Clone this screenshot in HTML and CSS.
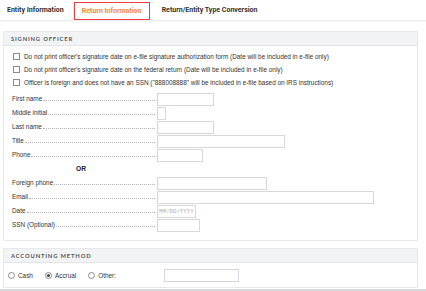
FILE: index.html
```html
<!DOCTYPE html>
<html>
<head>
<meta charset="utf-8">
<link rel="stylesheet" href="styles.css">
</head>
<body>
<div class="tabs">
  <div class="tab">Entity Information</div>
  <div class="sep"></div>
  <div class="tab active">Return Information</div>
  <div class="tab">Return/Entity Type Conversion</div>
</div>

<div class="panel signing">
  <div class="panel-head">SIGNING OFFICER</div>
  <div class="panel-body">
    <div class="checks">
      <label class="check"><span class="box"></span>Do not print officer's signature date on e-file signature authorization form (Date will be included in e-file only)</label>
      <label class="check"><span class="box"></span>Do not print officer's signature date on the federal return (Date will be included in e-file only)</label>
      <label class="check"><span class="box"></span>Officer is foreign and does not have an SSN ("888008888" will be included in e-file based on IRS instructions)</label>
    </div>
    <div class="fields">
      <div class="row"><span class="lbl">First name</span><span class="inp w56"></span></div>
      <div class="row"><span class="lbl">Middle initial</span><span class="inp w9"></span></div>
      <div class="row"><span class="lbl">Last name</span><span class="inp w56"></span></div>
      <div class="row"><span class="lbl">Title</span><span class="inp w128"></span></div>
      <div class="row"><span class="lbl">Phone</span><span class="inp w46"></span></div>
      <div class="or">OR</div>
      <div class="row"><span class="lbl">Foreign phone</span><span class="inp w110"></span></div>
      <div class="row"><span class="lbl">Email</span><span class="inp w217"></span></div>
      <div class="row"><span class="lbl">Date</span><span class="inp w39 ph">MM/DD/YYYY</span></div>
      <div class="row"><span class="lbl">SSN (Optional)</span><span class="inp w43"></span></div>
    </div>
  </div>
</div>

<div class="panel acct">
  <div class="panel-head">ACCOUNTING METHOD</div>
  <div class="panel-body radios">
    <label class="radio r-cash"><span class="circ"></span>Cash</label>
    <label class="radio r-accr"><span class="circ on"></span>Accrual</label>
    <label class="radio r-oth"><span class="circ"></span>Other:</label>
    <span class="inp w74 other"></span>
  </div>
</div>
<div class="bottom-line"></div>
</body>
</html>
```
FILE: styles.css
```css
* { box-sizing: border-box; }
html, body { margin: 0; padding: 0; background: #fff; }
body {
  font-family: "Liberation Sans", Arial, sans-serif;
  font-size: 6.4px;
  color: #333;
  width: 426px;
  height: 291px;
  overflow: hidden;
  position: relative;
}
.tabs {
  display: flex;
  align-items: center;
  height: 21px;
  border-bottom: 1px solid #eceef1;
  box-shadow: 0 1px 1px rgba(0,0,0,0.03);
  padding-left: 7px;
  margin-bottom: 10px;
}
.tab {
  font-family: Roboto, "Open Sans", sans-serif;
  font-weight: bold;
  font-size: 7px;
  color: #333;
  line-height: 8px;
}
.tab:first-child { margin-right: 9px; }
.sep { width: 1px; height: 18px; background: #eceef1; margin-right: 0; }
.tab.active {
  color: #f5894a;
  border: 1px solid #e8403e;
  height: 18px;
  line-height: 16px;
  margin-right: 12px;
  margin-top: 1px;
  width: 76px;
  text-align: center;
  padding: 0;
}
.panel {
  margin: 0 8px 0 3px;
  border: 1px solid #e6e8eb;
  border-radius: 1px;
}
.panel-head {
  background: #f2f3f5;
  height: 14px;
  border-bottom: 1px solid #e3e5e8;
  font-family: Lato, "Open Sans", sans-serif;
  font-weight: bold;
  font-size: 5.8px;
  letter-spacing: 0.85px;
  color: #555;
  line-height: 13px;
  padding-left: 7px;
}
.signing .panel-body { padding: 6px 0 8px 8px; }
.checks { display: flex; flex-direction: column; gap: 5px; margin-bottom: 6px; }
.check { display: flex; align-items: center; height: 8px; color: #333; }
.box {
  width: 7px; height: 7px;
  border: 1px solid #8a8a8a;
  margin: 0 4px 0 1px;
  background: #fff;
}
.fields { display: flex; flex-direction: column; }
.row { display: flex; align-items: center; height: 14px; }
.lbl {
  width: 145px;
  display: flex;
  align-items: baseline;
  white-space: nowrap;
  color: #333;
  line-height: 8px;
  padding-right: 2px;
}
.lbl::after {
  content: "";
  flex: 1;
  margin-left: 1px;
  border-bottom: 1px dotted #b5b5b5;
  height: 1px;
}
.inp {
  display: inline-block;
  height: 13px;
  border: 1px solid #d6d8db;
  background: #fff;
}
.w56 { width: 57px; }
.w9 { width: 9px; }
.w128 { width: 128px; }
.w46 { width: 46px; }
.w110 { width: 110px; }
.w217 { width: 217px; }
.w39 { width: 39px; }
.w43 { width: 43px; }
.w74 { width: 75px; }
.ph {
  font-family: "Liberation Mono", monospace;
  font-size: 5.8px;
  color: #b0b0b0;
  line-height: 11px;
  padding-left: 1px;
  white-space: nowrap;
  overflow: hidden;
}
.or {
  height: 14px;
  line-height: 14px;
  font-weight: bold;
  font-size: 6.6px;
  padding-left: 64px;
  color: #222;
}
.acct { margin-top: 7px; }
.radios {
  display: flex;
  align-items: center;
  height: 24px;
  padding-left: 4px;
}
.radio { display: flex; align-items: center; color: #333; }
.r-cash { margin-right: 12px; }
.r-accr { margin-right: 12px; }
.circ {
  width: 7px; height: 7px;
  border: 1px solid #8a8a8a;
  border-radius: 50%;
  margin-right: 3px;
  position: relative;
  background: #fff;
}
.circ.on::after {
  content: "";
  position: absolute;
  left: 1px; top: 1px;
  width: 3px; height: 3px;
  border-radius: 50%;
  background: #444;
}
.other { margin-left: 48px; }
.bottom-line {
  position: absolute;
  left: 0; right: 0; bottom: 0;
  height: 2px;
  background: #d4d6d9;
}
```
